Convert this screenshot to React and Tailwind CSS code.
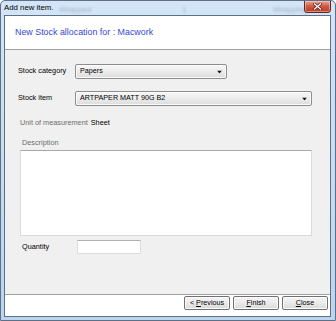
import React from "react";

function Arrow() {
  return (
    <svg width="5" height="3" viewBox="0 0 5 3" className="absolute right-[4px] top-1/2 -translate-y-1/2">
      <path d="M0 0 H5 L2.5 3 Z" fill="#111" />
    </svg>
  );
}

function Select({ w, children }) {
  return (
    <div
      className={`relative h-[15px] ${w} border border-[#8d8d8d] rounded-[2px] bg-gradient-to-b from-[#f7f7f7] via-[#ececec] to-[#dcdcdc] flex items-center pl-[4px] text-[7.2px] text-black shadow-[inset_0_0_0_1px_#fbfbfb]`}
    >
      {children}
      <Arrow />
    </div>
  );
}

function Btn({ children }) {
  return (
    <div className="w-[46px] h-[14px] border border-[#707070] rounded-[2px] bg-gradient-to-b from-[#f4f4f4] via-[#ebebeb] to-[#d8d8d8] shadow-[inset_0_0_0_1px_#fcfcfc] flex items-center justify-center text-[7.2px] text-black whitespace-pre">
      {children}
    </div>
  );
}

export default function App() {
  return (
    <div className="relative w-[336px] h-[321px] bg-gradient-to-b from-[#d3e5f7] to-[#bcd4ee] border border-[#5f7086] rounded-t-[5px] flex flex-col font-['Liberation_Sans',Arial,sans-serif] overflow-hidden">
      {/* title bar */}
      <div className="relative h-[14px] flex items-center pl-[3px] text-[7.8px] text-black shrink-0">
        <span className="absolute left-[58px] top-[3px] text-[8px] text-[#8090a0] opacity-60 blur-[1.2px]">Wrapped</span>
        <span className="absolute left-[181px] top-[3px] text-[8px] text-[#8090a0] opacity-60 blur-[1.2px]">1</span>
        <span className="absolute left-[272px] top-[3px] text-[8px] text-[#8090a0] opacity-60 blur-[1.2px]">Wrapping</span>
        <span className="relative">Add new item.</span>
      </div>
      <div className="absolute top-[-1px] right-[4px] w-[27px] h-[13px] rounded-b-[3px] border border-[#5a2a22] bg-gradient-to-b from-[#e9a594] via-[#cf5640] to-[#c03a22] shadow-[inset_0_0_0_1px_rgba(255,220,210,0.5)] flex items-center justify-center">
        <svg width="9" height="7" viewBox="0 0 9 7">
          <path d="M1.5 1 L7.5 6 M7.5 1 L1.5 6" stroke="#4a1a12" strokeWidth="2.6" strokeLinecap="square" />
          <path d="M1.5 1 L7.5 6 M7.5 1 L1.5 6" stroke="#ffffff" strokeWidth="1.4" strokeLinecap="square" />
        </svg>
      </div>

      {/* client area */}
      <div className="ml-[3px] mr-[4px] h-[302px] border border-[#5d7086] flex flex-col shrink-0 bg-[#f0f0f0]">
        <div className="h-[34px] bg-white border-b border-[#a0a0a0] flex items-center pl-[10px] shrink-0">
          <span className="text-[8.9px] text-[#3348d4] pt-[1px]">New Stock allocation for : Macwork</span>
        </div>

        <div className="h-[244px] flex flex-col pl-[13px] shrink-0 text-[7.3px]">
          <div className="mt-[14px] flex items-center">
            <span className="w-[57px] shrink-0">Stock category</span>
            <Select w="w-[152px]">Papers</Select>
          </div>
          <div className="mt-[12px] flex items-center">
            <span className="w-[57px] shrink-0">Stock item</span>
            <Select w="w-[237px]">ARTPAPER MATT 90G B2</Select>
          </div>
          <div className="mt-[12px] h-[10px] flex items-center pl-[2px]">
            <span className="text-[#6d6d6d]">Unit of measurement</span>
            <span className="ml-[3px] text-black">Sheet</span>
          </div>
          <div className="mt-[10px] h-[10px] flex items-center pl-[4px] text-[#6d6d6d]">Description</div>
          <div className="mt-[2px] ml-[2px] w-[292px] h-[86px] bg-white border border-[#dadada] border-t-[#a8a8a8]"></div>
          <div className="mt-[4px] flex items-center pl-[4px]">
            <span className="w-[55px] shrink-0">Quantity</span>
            <div className="w-[64px] h-[14px] bg-white border border-[#dcdcdc] border-t-[#b0b0b0]"></div>
          </div>
        </div>

        <div className="flex-1 bg-white border-t border-[#a0a0a0] flex items-start justify-end gap-[3px] pr-[2px] pt-[1px]">
          <Btn>{"< "}<span className="underline">P</span>revious</Btn>
          <Btn><span className="underline">F</span>inish</Btn>
          <Btn><span className="underline">C</span>lose</Btn>
        </div>
      </div>
    </div>
  );
}
